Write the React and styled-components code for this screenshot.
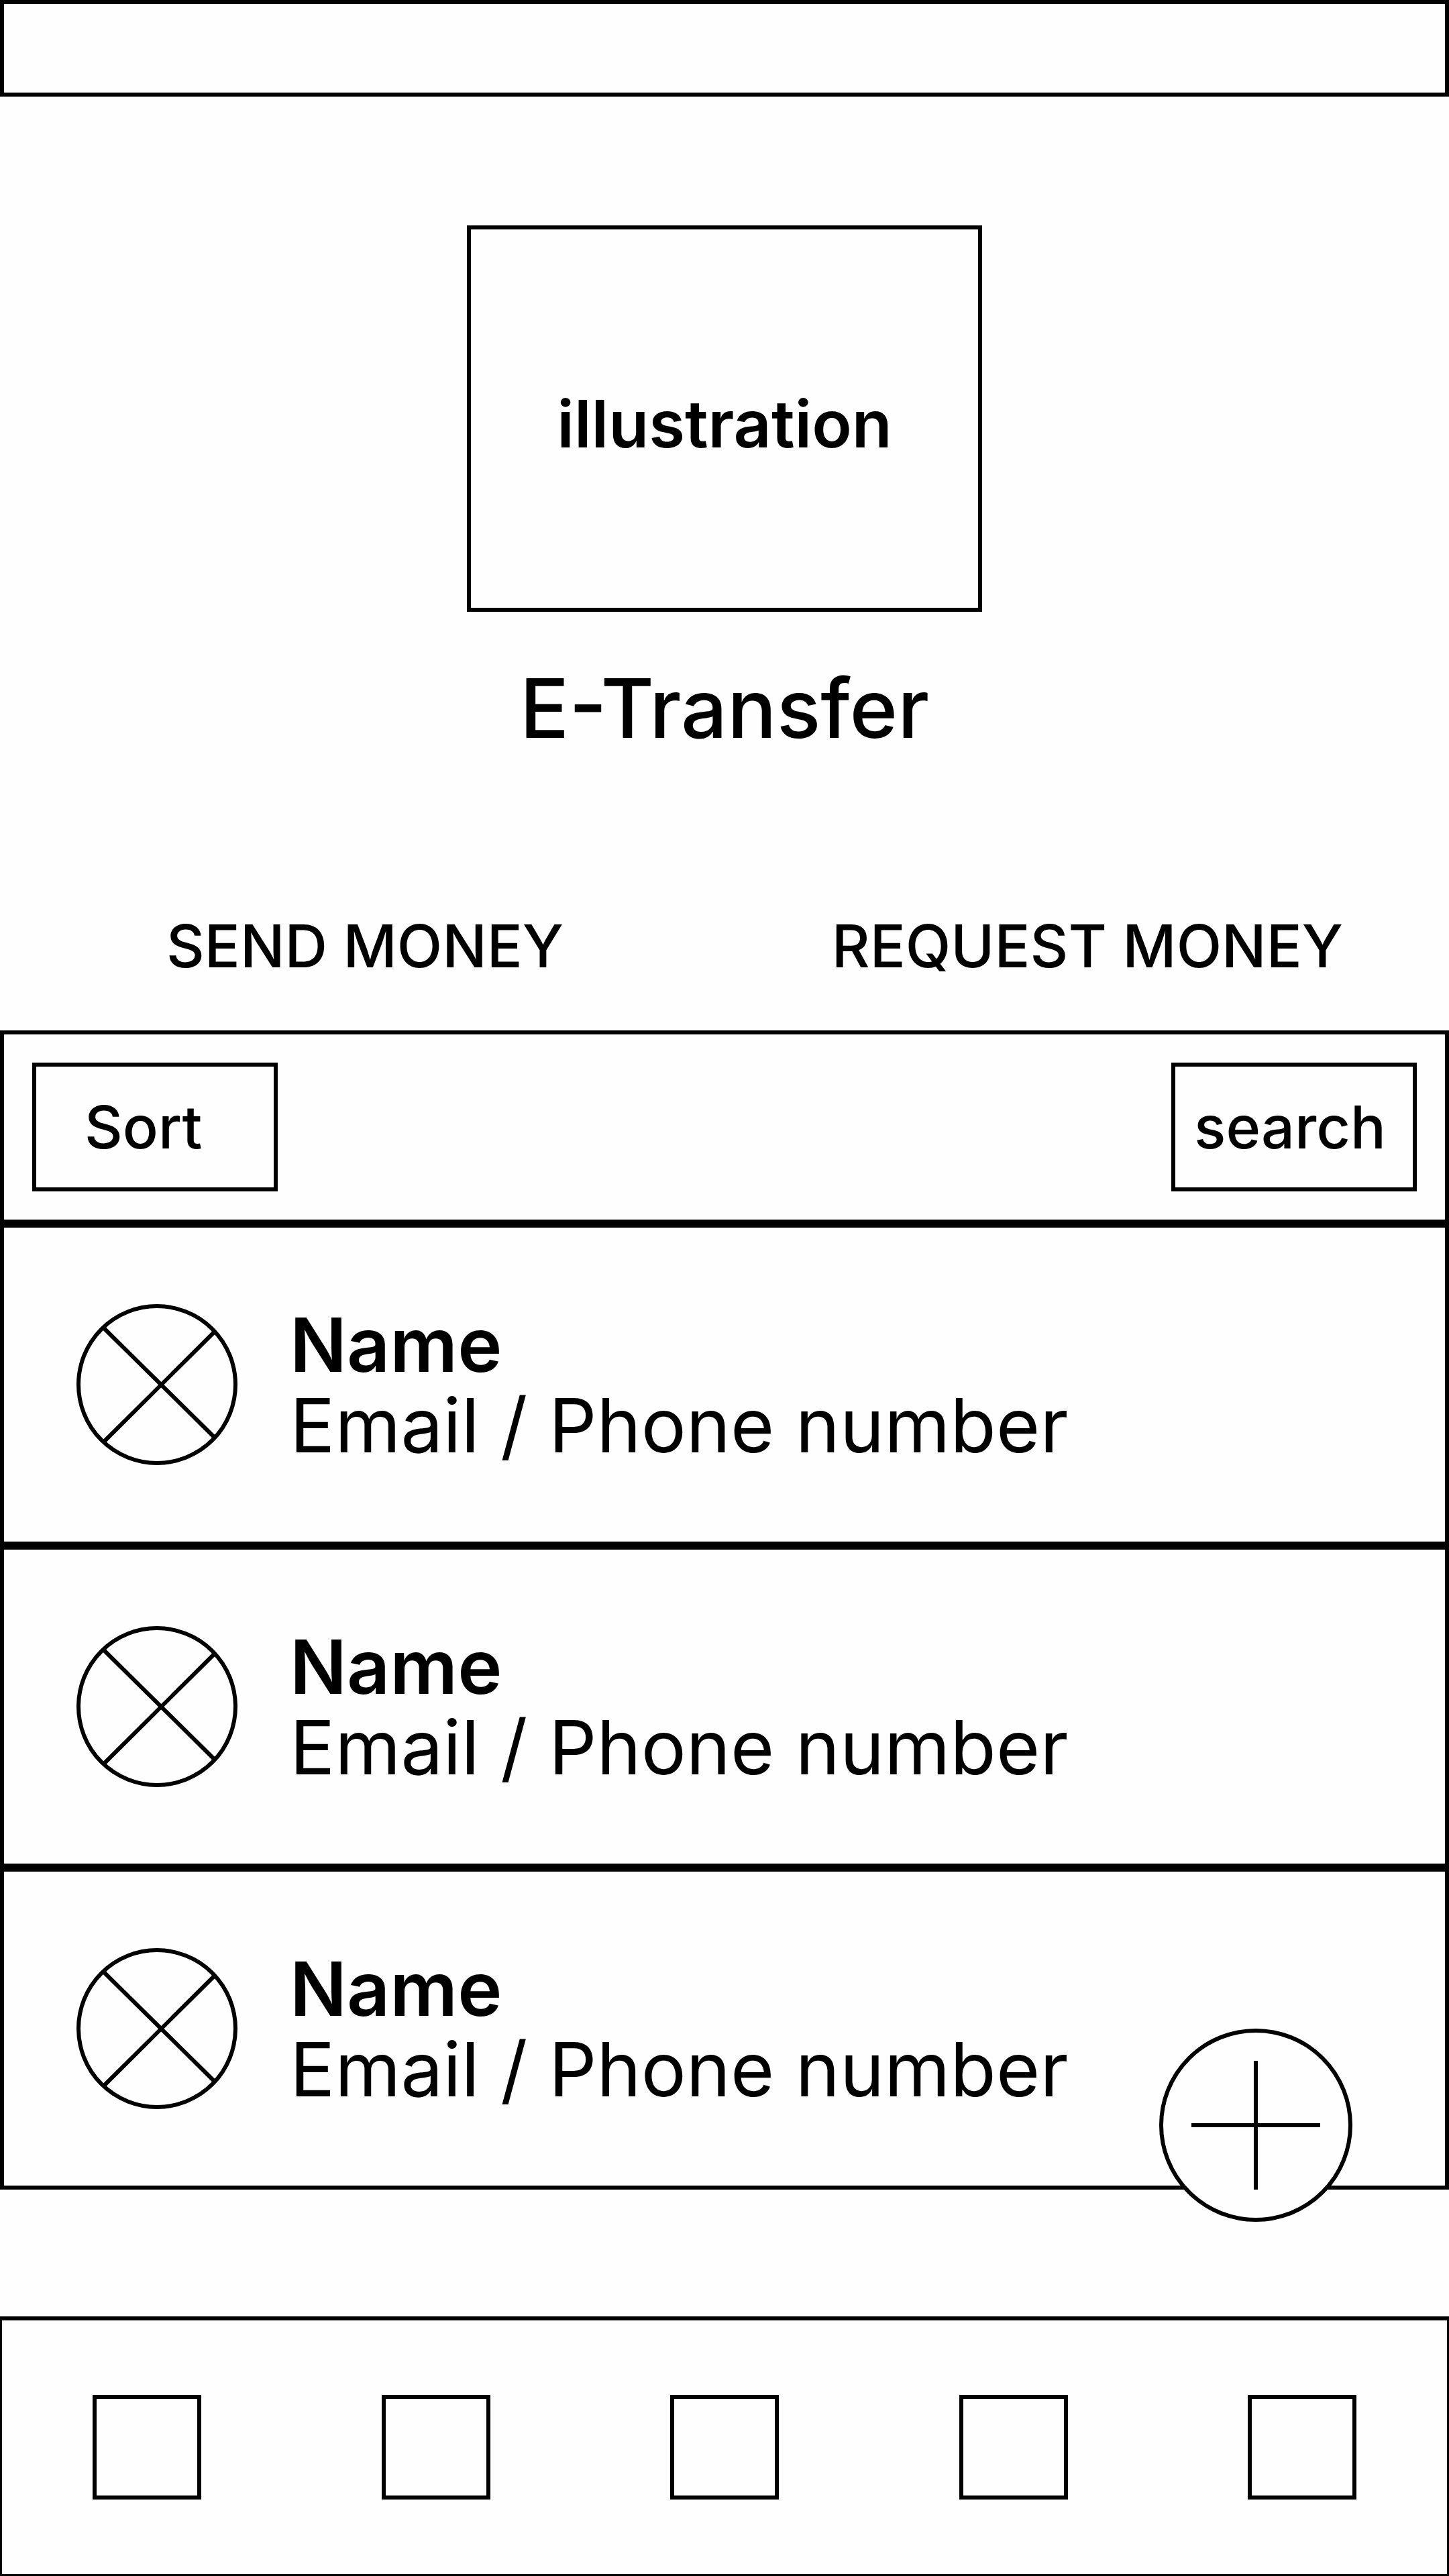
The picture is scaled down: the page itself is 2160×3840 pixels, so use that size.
import React from "react";
import styled, { createGlobalStyle } from "styled-components";

const GlobalStyle = createGlobalStyle`
  *, *::before, *::after { box-sizing: border-box; }
  body {
    margin: 0;
    background: #fefefe;
    color: #000;
    font-family: "Inter", "Liberation Sans", sans-serif;
  }
  button {
    font: inherit;
    color: inherit;
    border-radius: 0;
    cursor: pointer;
  }
`;

const line = "6px solid #000";

const Screen = styled.div`
  display: flex;
  flex-direction: column;
  min-height: 100vh;
`;

const StatusBar = styled.header`
  height: 144px;
  border: ${line};
`;

const Hero = styled.section`
  display: flex;
  flex-direction: column;
  align-items: center;
  gap: 72px;
  padding-top: 192px;
`;

const Illustration = styled.div`
  display: flex;
  align-items: center;
  justify-content: center;
  width: 768px;
  max-width: 100%;
  height: 576px;
  padding-top: 16px;
  border: ${line};
  font-size: 98px;
  font-weight: 600;
  line-height: 120px;
`;

const Title = styled.h1`
  margin: 0;
  font-size: 122px;
  font-weight: 500;
  line-height: 144px;
`;

const Tabs = styled.nav`
  display: flex;
  justify-content: space-between;
  margin-top: 156px;
  padding: 0 158px 0 248px;
`;

const Tab = styled.button`
  padding: 78px 0;
  border: 0;
  background: none;
  font-size: 88px;
  font-weight: 500;
  line-height: 96px;
  white-space: nowrap;
`;

const Panel = styled.section`
  position: relative;
`;

const Toolbar = styled.div`
  display: flex;
  justify-content: space-between;
  padding: 42px;
  border: ${line};
`;

const ToolButton = styled.button`
  width: 366px;
  height: 192px;
  padding: 0 0 0 ${(p) => p.$inset}px;
  border: ${line};
  background: none;
  font-size: 88px;
  font-weight: 500;
  line-height: 96px;
  text-align: left;
`;

const ContactList = styled.ul`
  margin: 0;
  padding: 0;
  list-style: none;
`;

const Contact = styled.li`
  display: flex;
  align-items: center;
  gap: 78px;
  height: 480px;
  padding: 0 108px;
  border: ${line};
`;

const Avatar = styled.svg`
  flex: none;
  width: 240px;
  height: 240px;
  fill: none;
  stroke: #000;
  stroke-width: 6;
`;

const ContactText = styled.div`
  font-size: 112px;
  line-height: 120px;
  white-space: nowrap;
`;

const Name = styled.div`
  font-weight: 600;
`;

const Detail = styled.div`
  font-weight: 400;
`;

const AddButton = styled.button`
  position: absolute;
  right: 144px;
  bottom: -48px;
  width: 288px;
  height: 288px;
  padding: 0;
  border: 0;
  background: none;
`;

const AddIcon = styled.svg`
  display: block;
  width: 100%;
  height: 100%;
  fill: #fefefe;
  stroke: #000;
  stroke-width: 6;
`;

const BottomNav = styled.nav`
  display: flex;
  justify-content: space-between;
  margin-top: auto;
  padding: 111px 135px;
  border: 3px solid #000;
  border-top-width: 6px;
`;

const NavButton = styled.button`
  width: 162px;
  height: 156px;
  padding: 0;
  border: ${line};
  background: none;
`;

const contacts = [1, 2, 3];
const destinations = ["Home", "Accounts", "Transfer", "Cards", "More"];

export default function App() {
  return (
    <>
      <GlobalStyle />
      <Screen>
        <StatusBar />
        <main>
          <Hero>
            <Illustration>illustration</Illustration>
            <Title>E-Transfer</Title>
          </Hero>
          <Tabs>
            <Tab type="button">SEND MONEY</Tab>
            <Tab type="button">REQUEST MONEY</Tab>
          </Tabs>
          <Panel>
            <Toolbar>
              <ToolButton type="button" $inset={72}>Sort</ToolButton>
              <ToolButton type="button" $inset={28}>search</ToolButton>
            </Toolbar>
            <ContactList>
              {contacts.map((id) => (
                <Contact key={id}>
                  <Avatar viewBox="0 0 240 240" aria-hidden="true">
                    <circle cx="120" cy="120" r="117" />
                    <path d="M40 35 206 199M206 41 40 206" />
                  </Avatar>
                  <ContactText>
                    <Name>Name</Name>
                    <Detail>Email / Phone number</Detail>
                  </ContactText>
                </Contact>
              ))}
            </ContactList>
            <AddButton type="button" aria-label="Add contact">
              <AddIcon viewBox="0 0 288 288" aria-hidden="true">
                <circle cx="144" cy="144" r="141" />
                <path d="M144 48V240M48 144H240" />
              </AddIcon>
            </AddButton>
          </Panel>
        </main>
        <BottomNav>
          {destinations.map((name) => (
            <NavButton key={name} type="button" aria-label={name} />
          ))}
        </BottomNav>
      </Screen>
    </>
  );
}
